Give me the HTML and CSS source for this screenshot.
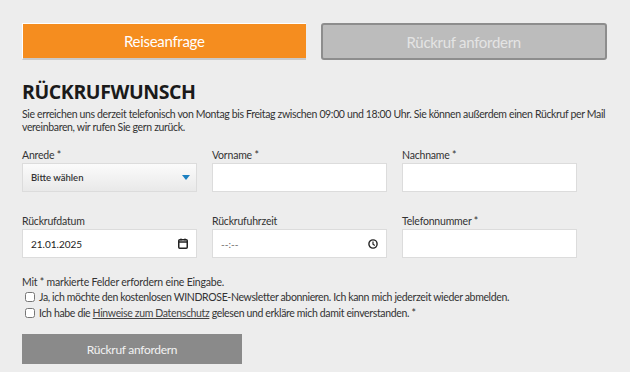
FILE: index.html
```html
<!DOCTYPE html>
<html lang="de">
<head>
    <meta charset="UTF-8">
    <title>Rückrufwunsch</title>
    <link rel="stylesheet" href="styles.css">
</head>
<body>
    <div class="page">
        <div class="tabs">
            <div class="tab tab-active">Reiseanfrage</div>
            <div class="tab tab-off">Rückruf anfordern</div>
        </div>

        <h2 class="title">RÜCKRUFWUNSCH</h2>
        <p class="intro">Sie erreichen uns derzeit telefonisch von Montag bis Freitag zwischen 09:00 und 18:00 Uhr. Sie können außerdem einen Rückruf per Mail vereinbaren, wir rufen Sie gern zurück.</p>

        <div class="grid">
            <div class="field">
                <label>Anrede *</label>
                <div class="select">
                    <span>Bitte wählen</span>
                    <svg width="8" height="5" viewBox="0 0 8 5"><path d="M0 0H8L4 5Z" fill="#1b7fc0"/></svg>
                </div>
            </div>
            <div class="field">
                <label>Vorname *</label>
                <div class="input"></div>
            </div>
            <div class="field">
                <label>Nachname *</label>
                <div class="input"></div>
            </div>

            <div class="field">
                <label>Rückrufdatum</label>
                <div class="input">
                    <span class="val">21.01.2025</span>
                    <svg width="10" height="11" viewBox="0 0 10 11"><rect x="0.75" y="1.75" width="8.5" height="8.5" rx="1" fill="none" stroke="#222" stroke-width="1.5"/><path d="M1 4H9" stroke="#222" stroke-width="1.5"/><path d="M3 0.5V2.5M7 0.5V2.5" stroke="#222" stroke-width="1.2"/></svg>
                </div>
            </div>
            <div class="field">
                <label>Rückrufuhrzeit</label>
                <div class="input">
                    <span class="val muted">--:--</span>
                    <svg width="10" height="10" viewBox="0 0 10 10"><circle cx="5" cy="5" r="4.1" fill="none" stroke="#222" stroke-width="1.4"/><path d="M5 2.6V5.2L6.8 6.4" fill="none" stroke="#222" stroke-width="1.2"/></svg>
                </div>
            </div>
            <div class="field">
                <label>Telefonnummer *</label>
                <div class="input"></div>
            </div>
        </div>

        <p class="hint">Mit * markierte Felder erfordern eine Eingabe.</p>
        <label class="check"><input type="checkbox"><span>Ja, ich möchte den kostenlosen WINDROSE-Newsletter abonnieren. Ich kann mich jederzeit wieder abmelden.</span></label>
        <label class="check"><input type="checkbox"><span>Ich habe die <a href="#">Hinweise zum Datenschutz</a> gelesen und erkläre mich damit einverstanden. *</span></label>

        <button class="submit">Rückruf anfordern</button>
    </div>
</body>
</html>
```

FILE: styles.css
```css
* { margin: 0; padding: 0; box-sizing: border-box; }
body { background: #ededed; font-family: "Lato", "Open Sans", sans-serif; color: #333; }
.page { padding: 23px 22px 0 22px; width: 630px; }

.tabs { display: flex; gap: 15px; width: 585px; }
.tab { flex: 1; height: 37px; display: flex; align-items: center; justify-content: center; font-size: 15px; letter-spacing: -0.3px; }
.tab-active { background: #f58d1f; color: #fff; border-top: 1px solid #fff; border-left: 1px solid #fff; border-bottom: 2px solid #c9c9c9; }
.tab-off { background: #bcbcbc; color: #e4e4e4; border: 2px solid #8d8d8d; border-radius: 3px; }

.title { font-family: "Open Sans", sans-serif; font-weight: 700; font-size: 19.5px; color: #1a1a1a; margin-top: 19px; letter-spacing: -0.4px; line-height: 26px; }
.intro { font-size: 10.5px; line-height: 13px; margin-top: 3px; width: 595px; letter-spacing: -0.35px; }

.grid { display: grid; grid-template-columns: 175px 175px 175px; column-gap: 15px; row-gap: 23px; margin-top: 15px; }
.field label { display: block; font-size: 10.5px; line-height: 13px; margin-bottom: 1px; letter-spacing: -0.2px; }
.input, .select { height: 29px; border: 1px solid #dcdcdc; background: #fff; display: flex; align-items: center; justify-content: space-between; padding: 0 8px; }
.select { background: linear-gradient(#fbfbfb, #e9e9e9); font-size: 9.5px; color: #333; padding-right: 6px; }
.select span { font-weight: 600; }
.val { font-size: 10px; color: #222; }
.val.muted { color: #666; }

.hint { font-size: 10.5px; margin-top: 18px; line-height: 13px; letter-spacing: -0.2px; }
.check { display: flex; align-items: center; gap: 4px; font-size: 10.5px; line-height: 16px; margin-left: 3px; letter-spacing: -0.35px; }
.check input { width: 10px; height: 10px; margin: 0; }
.check a { color: #444; }
.submit { display: block; margin-top: 13px; width: 220px; height: 30px; background: #8a8a8a; color: #f2f2f2; border: none; font-family: inherit; font-size: 12px; letter-spacing: -0.3px; }
```
